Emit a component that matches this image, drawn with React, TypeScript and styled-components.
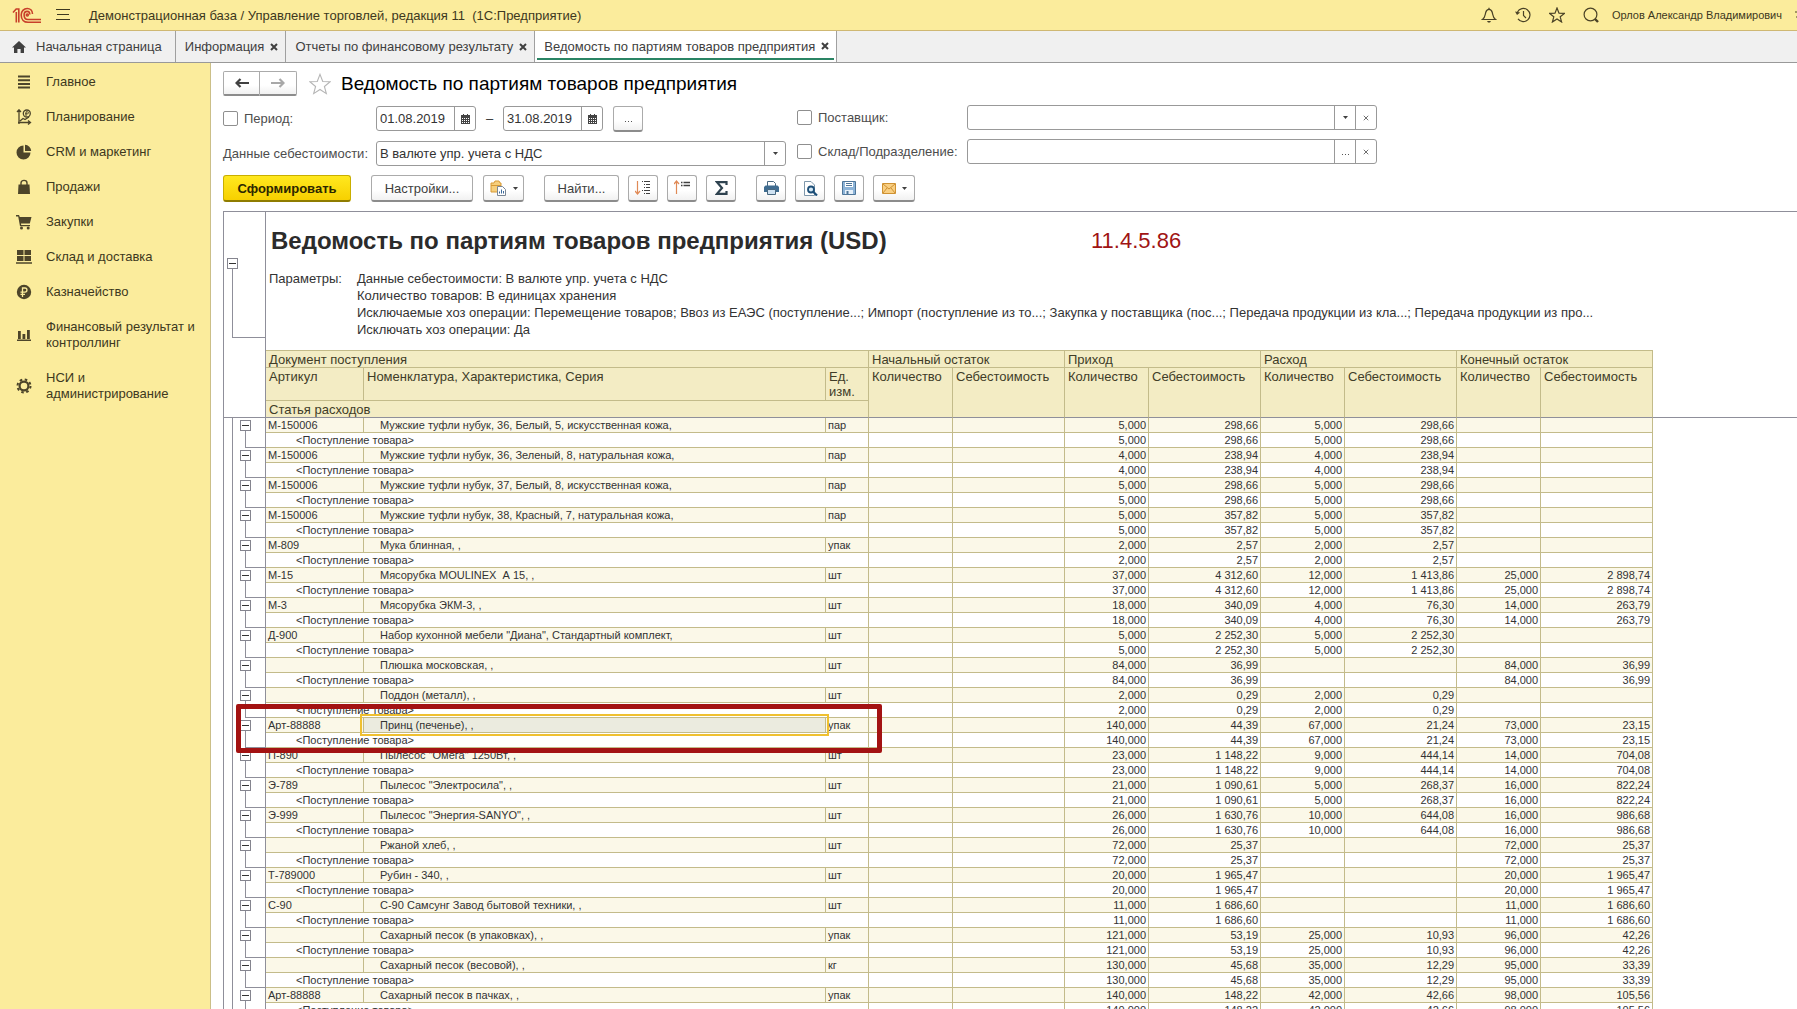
import React from 'react';
import styled, { createGlobalStyle, css } from 'styled-components';

const GlobalStyle = createGlobalStyle`
  *, *::before, *::after { box-sizing: border-box; }
  body { margin: 0; background: #fff; }
  body, button, input, select {
    font-family: "Liberation Sans", Arial, sans-serif;
    font-size: 13px;
    color: #333;
  }
  svg { display: block; flex: none; }
`;

const Page = styled.div`
  display: flex;
  flex-direction: column;
  height: 100vh;
  overflow: hidden;
`;

/* ---------- top bar ---------- */

const TopBar = styled.header`
  display: flex;
  align-items: center;
  height: 31px;
  flex: none;
  padding: 0 0 0 12px;
  background: #fbec9c;
  border-bottom: 1px solid #cfb873;
  overflow: hidden;
`;

const IconButton = styled.button`
  display: flex;
  align-items: center;
  flex: none;
  padding: 0;
  border: 0;
  background: none;
  color: #4a4226;
  overflow: hidden;
`;

const MenuButton = styled(IconButton)`
  margin-left: 14px;
`;

const AppTitle = styled.span`
  margin-left: 19px;
  white-space: nowrap;
  color: #3d3820;
`;

const TopTools = styled.div`
  display: flex;
  align-items: center;
  gap: 18px;
  margin-left: auto;
`;

const UserName = styled.a`
  margin: 0 13px 0 13px;
  font-size: 11px;
  color: #3d3820;
  text-decoration: none;
  white-space: nowrap;
`;

/* ---------- tabs ---------- */

const Tabs = styled.nav`
  display: flex;
  height: 32px;
  flex: none;
  background: #f0f0f0;
  border-bottom: 1px solid #999;
`;

const Tab = styled.div`
  display: flex;
  align-items: center;
  gap: 6px;
  padding: 0 7px 0 9px;
  border-right: 1px solid #a0a0a0;
  white-space: nowrap;
`;

const HomeTab = styled(Tab)`
  gap: 10px;
  padding: 0 13px 0 12px;
`;

const ActiveTab = styled(Tab)`
  align-items: flex-start;
  padding: 0 2px;
  background: #fff;
`;

const ActiveInner = styled.div`
  display: flex;
  align-items: center;
  gap: 6px;
  height: 29px;
  padding: 3px 5px 0 7px;
  border-bottom: 2px solid #2a8464;
`;

const TabLink = styled.a`
  color: #404040;
  text-decoration: none;
`;

/* ---------- sidebar ---------- */

const Body = styled.div`
  display: flex;
  flex: 1;
  min-height: 0;
`;

const Sidebar = styled.nav`
  display: flex;
  flex-direction: column;
  width: 211px;
  flex: none;
  padding-top: 1px;
  background: #fbec9c;
  border-right: 1px solid #cbbf88;
`;

const SideLink = styled.a`
  display: flex;
  align-items: center;
  gap: 14px;
  padding: 10px 12px 9px 16px;
  line-height: 16px;
  color: #3d3820;
  text-decoration: none;
`;

/* ---------- main ---------- */

const Main = styled.main`
  display: flex;
  flex-direction: column;
  flex: 1;
  min-width: 0;
  gap: 9px;
  padding: 8px 0 0 12px;
`;

const PageHead = styled.div`
  display: flex;
  align-items: center;
  height: 25px;
  flex: none;
`;

const button = css`
  display: flex;
  align-items: center;
  justify-content: center;
  flex: none;
  padding: 0;
  color: #404040;
  border: 1px solid #ababab;
  border-bottom: 2px solid #8c8c8c;
  background: linear-gradient(#fff 60%, #f1f1f1);
`;

const NavButtons = styled.div`
  display: flex;
  & > button { height: 25px; width: 37px; }
  & > button:first-child { border-radius: 2px 0 0 2px; }
  & > button:last-child { border-left: 0; border-radius: 0 2px 2px 0; }
`;

const NavButton = styled.button`
  ${button}
`;

const PageTitle = styled.h1`
  margin: 0 0 0 10px;
  font-size: 19px;
  font-weight: 400;
  line-height: 24px;
  color: #000;
`;

const Filters = styled.div`
  display: flex;
  align-items: flex-start;
  gap: 11px;
`;

const FilterColumn = styled.div<{ $top: number; $gap: number; $width: number }>`
  display: flex;
  flex-direction: column;
  gap: ${(p) => p.$gap}px;
  width: ${(p) => p.$width}px;
  padding-top: ${(p) => p.$top}px;
`;

const FilterRow = styled.div`
  display: flex;
  align-items: center;
  height: 25px;
`;

const FieldLabel = styled.label<{ $width: number }>`
  display: flex;
  align-items: center;
  gap: 6px;
  width: ${(p) => p.$width}px;
  flex: none;
  color: #4d4d4d;
  white-space: nowrap;
`;

const Check = styled.input.attrs({ type: 'checkbox' })`
  appearance: none;
  width: 15px;
  height: 15px;
  margin: 0;
  flex: none;
  border: 1px solid #8f8f8f;
  border-radius: 2px;
  background: #fff;
`;

const Field = styled.div<{ $width?: number }>`
  display: flex;
  height: 25px;
  ${(p) => (p.$width ? `width: ${p.$width}px;` : 'flex: 1;')}
  border: 1px solid #999;
  border-radius: 3px;
  background: #fff;
`;

const fieldText = css`
  appearance: none;
  flex: 1;
  min-width: 0;
  padding: 0 3px;
  border: 0;
  outline: 0;
  background: none;
`;

const TextInput = styled.input`
  ${fieldText}
`;

const SelectInput = styled.select`
  ${fieldText}
`;

const FieldButton = styled.button<{ $width: number }>`
  display: flex;
  align-items: center;
  justify-content: center;
  width: ${(p) => p.$width}px;
  flex: none;
  padding: 0;
  border: 0;
  border-left: 1px solid #999;
  background: none;
  color: #404040;
`;

const Dash = styled.span`
  width: 27px;
  text-align: center;
`;

const PeriodButton = styled.button`
  ${button}
  width: 30px;
  height: 26px;
  margin-left: 10px;
  border-radius: 3px;
`;

const Toolbar = styled.div`
  display: flex;
  height: 27px;
  flex: none;
`;

const ToolGroup = styled.div<{ $gap: number }>`
  display: flex;
  gap: ${(p) => p.$gap}px;
  margin-right: 20px;
`;

const ToolButton = styled.button<{ $width: number }>`
  ${button}
  gap: 6px;
  width: ${(p) => p.$width}px;
  height: 27px;
  border-radius: 3px;
`;

const PrimaryButton = styled(ToolButton)`
  font-weight: 700;
  color: #2b2600;
  border-color: #c9ae00;
  border-bottom-color: #8f7c00;
  background: linear-gradient(#ffe81f, #f7d000);
`;

/* ---------- spreadsheet ---------- */

const LINE = '#8f8f9a';
const CELL = '#c3bb8a';

const Sheet = styled.section`
  flex: 1;
  min-height: 0;
  overflow: hidden;
  border-top: 1px solid ${LINE};
`;

const SheetHead = styled.div`
  display: flex;
`;

const HeadGutter = styled.div`
  width: 43px;
  flex: none;
  padding-top: 46px;
  border-left: 1px solid ${LINE};
  border-right: 1px solid ${LINE};
`;

const Toggle = styled.button<{ $indent: number }>`
  display: flex;
  align-items: center;
  justify-content: center;
  width: 11px;
  height: 11px;
  margin: 0 0 0 ${(p) => p.$indent}px;
  padding: 0;
  border: 1px solid #85858f;
  background: #fff;
  &::before { content: ''; width: 7px; height: 1px; background: #333; }
`;

const Stem = styled.div<{ $indent: number; $height: number }>`
  height: ${(p) => p.$height}px;
  margin-left: ${(p) => p.$indent}px;
  border-left: 1px solid ${LINE};
  border-bottom: 1px solid ${LINE};
`;

const HeadContent = styled.div`
  flex: 1;
  padding: 15px 3px 12px;
`;

const TitleRow = styled.div`
  display: flex;
  align-items: center;
  height: 28px;
  padding-left: 2px;
`;

const ReportTitle = styled.h2`
  margin: 0;
  width: 820px;
  font-size: 24px;
  line-height: 28px;
  color: #2b2b2b;
`;

const Version = styled.span`
  font-size: 22px;
  color: #a01414;
`;

const Params = styled.dl`
  display: flex;
  margin: 15px 0 0;
  line-height: 17px;
  color: #333;
`;

const ParamsName = styled.dt`
  width: 88px;
  flex: none;
`;

const ParamsText = styled.dd`
  margin: 0;
  white-space: nowrap;
`;

const Table = styled.table`
  width: 100%;
  table-layout: fixed;
  border-spacing: 0;
  color: #333;
`;

const ColumnNames = styled.tr`
  height: 33px;
`;

const HeadCell = styled.th<{ $first?: boolean }>`
  padding: 1px 3px 0;
  font-size: 13px;
  font-weight: 400;
  line-height: 15px;
  text-align: left;
  vertical-align: top;
  color: #403c28;
  background: #f3ecc4;
  border-right: 1px solid ${CELL};
  border-bottom: 1px solid ${CELL};
  ${(p) => p.$first && `border-top: 1px solid ${CELL};`}
`;

const FreezeCell = styled(HeadCell)`
  border-bottom-color: ${LINE};
`;

const GutterHead = styled.td`
  border-left: 1px solid ${LINE};
  border-right: 1px solid ${LINE};
  border-bottom: 1px solid ${LINE};
`;

const FillerHead = styled.td`
  border-bottom: 1px solid ${LINE};
`;

const GutterCell = styled.td`
  position: relative;
  padding: 0;
  border-right: 1px solid ${LINE};
`;

const GutterInner = styled.div`
  display: flex;
  height: 30px;
`;

const GutterStrip = styled.div`
  width: 10px;
  border-left: 1px solid ${LINE};
  border-right: 1px solid ${LINE};
`;

const GutterBranch = styled.div`
  flex: 1;
  padding-top: 2px;
`;

const Cell = styled.td<{ $item?: boolean; $indent?: number; $num?: boolean; $selected?: boolean }>`
  position: relative;
  padding: 0 2px 0 ${(p) => p.$indent ?? 2}px;
  font-size: 11px;
  line-height: 14px;
  white-space: nowrap;
  text-align: ${(p) => (p.$num ? 'right' : 'left')};
  background: ${(p) => (p.$selected ? '#ebebdf' : p.$item ? '#fbf8e8' : '#fff')};
  border-right: 1px solid ${CELL};
  border-bottom: 1px solid ${CELL};
`;

const Selection = styled.span`
  position: absolute;
  inset: -4px;
  border: 2px solid #efc030;
  z-index: 1;
  pointer-events: none;
`;

const Highlight = styled.span`
  position: absolute;
  top: -14px;
  left: 13px;
  width: 646px;
  height: 49px;
  border: 5px solid #a31212;
  border-radius: 2px;
  z-index: 2;
  pointer-events: none;
`;

/* ---------- icons ---------- */

const Logo = () => (
  <svg width="30" height="17" viewBox="0 0 30 17" fill="none" stroke="#c8402a" strokeWidth="1.6">
    <path d="M1 5.5 L4.2 2 H6.8 V15.5 M4.3 5 V15.5" />
    <path d="M20.5 7 C20.5 3.5 18 1.5 15.2 1.5 C11.8 1.5 9.2 4.3 9.2 8 C9.2 12.5 12 15.3 16 15.3 H29" />
    <path d="M17.8 7.6 C17.8 5.6 16.8 4.4 15.2 4.4 C13.4 4.4 12.1 5.8 12.1 8 C12.1 10.9 13.5 12.5 16 12.5 H29" />
    <circle cx="15.3" cy="8" r="1" />
  </svg>
);

const Burger = () => (
  <svg width="14" height="12" viewBox="0 0 14 12" stroke="#3d3820">
    <path d="M0 .5H14M1 5.5H13M0 10.5H14" />
  </svg>
);

const Line16 = ({ children }: { children: React.ReactNode }) => (
  <svg width="16" height="16" viewBox="0 0 16 16" fill="none" stroke="#4a4226" strokeWidth="1.2">
    {children}
  </svg>
);

const Bell = () => (
  <Line16>
    <path d="M1.5 12.5 H14.5 C11.8 10.5 12 8.5 11.3 5.5 C10.8 3.5 9.5 2.4 8 2.4 C6.5 2.4 5.2 3.5 4.7 5.5 C4 8.5 4.2 10.5 1.5 12.5 Z" />
    <path d="M8 .8V2.4" />
    <path d="M6 14 H10 L9 15.6 H7Z" fill="#4a4226" stroke="none" />
  </Line16>
);

const History = () => (
  <Line16>
    <path d="M2.5 5 A6.6 6.6 0 1 1 3 11.8" />
    <path d="M8.5 4V8.5L11 11" />
    <path d="M0 4.5 L5.2 5.6 L2 8 Z" fill="#4a4226" stroke="none" />
  </Line16>
);

const starPath = 'M8 1 L10 6.2 L15.4 6.4 L11.2 9.8 L12.6 15 L8 12 L3.4 15 L4.8 9.8 L.6 6.4 L6 6.2 Z';

const Star = () => (
  <Line16>
    <path d={starPath} />
  </Line16>
);

const Search = () => (
  <Line16>
    <circle cx="7.5" cy="7.5" r="6.4" />
    <path d="M12 12 L15 15" strokeWidth="2.4" />
  </Line16>
);

const Home = () => (
  <svg width="14" height="12" viewBox="0 0 14 12" fill="#404040">
    <path d="M7 0 L14 6.5 H12 V12 H8.6 V8 H5.4 V12 H2 V6.5 H0 Z" />
  </svg>
);

const Cross = ({ size = 8, width = 2 }: { size?: number; width?: number }) => (
  <svg width={size} height={size} viewBox="0 0 8 8" stroke="#404040" strokeWidth={width}>
    <path d="M1 1L7 7M7 1L1 7" />
  </svg>
);

const Caret = () => (
  <svg width="5" height="3" viewBox="0 0 5 3" fill="#404040">
    <path d="M0 0H5L2.5 3Z" />
  </svg>
);

const Dots = () => (
  <svg width="7" height="9" viewBox="0 0 7 9" fill="#555">
    <path d="M0 7h1v1H0zM3 7h1v1H3zM6 7h1v1H6z" />
  </svg>
);

const Arrow = ({ color, flip }: { color: string; flip?: boolean }) => (
  <svg width="14" height="10" viewBox="0 0 14 10" fill="none" stroke={color} strokeWidth="2.2">
    {flip ? <path d="M0 5H13M8.5 1L12.5 5L8.5 9" /> : <path d="M14 5H1M5.5 1L1.5 5L5.5 9" />}
  </svg>
);

const FavStarButton = styled(IconButton)`
  margin-left: 12px;
`;

const FavStar = () => (
  <svg width="22" height="22" viewBox="0 0 16 16" fill="none" stroke="#b5b5b5" strokeWidth=".8">
    <path d={starPath} />
  </svg>
);

const Calendar = () => (
  <svg width="9" height="10" viewBox="0 0 9 10">
    <path d="M0 1H9V10H0Z" fill="#444" />
    <path d="M2 0h1v2H2zM6 0h1v2H6z" fill="#444" />
    <path d="M1 4h1v1H1zM3 4h1v1H3zM5 4h1v1H5zM7 4h1v1H7zM1 6h1v1H1zM3 6h1v1H3zM5 6h1v1H5zM7 6h1v1H7zM1 8h1v1H1zM3 8h1v1H3zM5 8h1v1H5zM7 8h1v1H7z" fill="#fff" />
  </svg>
);

const side = (children: React.ReactNode) => (
  <svg width="16" height="16" viewBox="0 0 16 16" fill="#4d452a" stroke="none">
    {children}
  </svg>
);

const sideIcons = {
  main: side(<path d="M2 1.5h12v2H2zM2 5.2h12v2H2zM2 8.900h12v2H2zM2 12.6h12v2H2z" />),
  plan: side(
    <g fill="none" stroke="#4d452a" strokeWidth="1.3">
      <path d="M3 15V1M1 3L3 .8L5 3M2 13.5H14M12 11.5L14.5 13.5L12 15.5M4 12L7 9.5L9 10.5L13 8" />
      <circle cx="10.8" cy="4.5" r="3.5" />
      <path d="M10 7V2.8H11.5C12.8 2.8 12.8 4.8 11.5 4.8H9" strokeWidth="1" />
    </g>,
  ),
  crm: side(
    <>
      <path d="M7.5 1.5V8.5H14.5A7 7 0 1 1 7.5 1.5Z" />
      <path d="M9 .8A6.5 6.5 0 0 1 15.2 7H9Z" />
    </>,
  ),
  sales: side(
    <>
      <path d="M2.5 5.5H13.5L14 15H2Z" />
      <path d="M5 8V4C5 .5 11 .5 11 4V8" fill="none" stroke="#4d452a" strokeWidth="1.4" />
    </>,
  ),
  buy: side(
    <>
      <path d="M0 1H3L3.8 3H15.5L13.8 9.5H5L5.2 11H14V12.3H4L2.2 2.4H0Z" />
      <circle cx="5.5" cy="14" r="1.5" />
      <circle cx="12.2" cy="14" r="1.5" />
    </>,
  ),
  stock: side(<path d="M1 1h6.5v5H1zM8.5 1H15v5H8.5zM1 7h6.5v5H1zM8.5 7H15v5H8.5zM0 13.2h16v1.6H0z" />),
  cash: side(
    <>
      <circle cx="8" cy="8" r="7.2" />
      <path d="M6.5 13V4H9C11.6 4 11.6 8.2 9 8.2H4.5M4.5 10.3H9" fill="none" stroke="#fbec9c" strokeWidth="1.3" />
    </>,
  ),
  chart: side(<path d="M2 4h2.8v8H2zM6.5 7h2.8v5H6.5zM11 3h2.8v9H11zM1 12.5h14V14H1z" />),
  gear: side(
    <g fill="none" stroke="#4d452a">
      <circle cx="8" cy="8" r="4.4" strokeWidth="2.2" />
      <circle cx="8" cy="8" r="6.5" strokeWidth="2" strokeDasharray="2.55 2.55" />
    </g>,
  ),
};

const Variants = () => (
  <svg width="17" height="16" viewBox="0 0 17 16" fill="none">
    <path d="M1 3H4L5 1H9L10 3H11V12H1Z" fill="#f6cf7d" stroke="#d79a36" />
    <path d="M1 5.5H11" stroke="#d79a36" />
    <path d="M7.5 6.5H12.5L15.5 9.5V15.5H7.5Z" fill="#fff" stroke="#7a8694" />
    <path d="M9.5 13.5V11.5M11.5 13.5V9.5M13.5 13.5V11" stroke="#3c6b9c" />
  </svg>
);

const Expand = () => (
  <svg width="16" height="16" viewBox="0 0 16 16" fill="none">
    <path d="M2.5 1V14M0 11L2.5 14L5 11" stroke="#e08a56" strokeWidth="1.2" />
    <path d="M7 1.5H8M9 1.5H15M9 4.5H10M11 4.5H15M9 7.5H10M11 7.5H15M7 10.5H8M9 10.5H15M9 13.5H10M11 13.5H15" stroke="#404040" />
  </svg>
);

const Collapse = () => (
  <svg width="16" height="16" viewBox="0 0 16 16" fill="none">
    <path d="M2.5 1V14M0 4L2.5 1L5 4" stroke="#e08a56" strokeWidth="1.2" />
    <path d="M7 2.5H8.5M9.5 2.5H16M7 5.500H8.5M9.5 5.500H16" stroke="#404040" strokeWidth="1.5" />
  </svg>
);

const Sum = () => (
  <svg width="13" height="14" viewBox="0 0 13 14" fill="none" stroke="#2f4350" strokeWidth="2.2">
    <path d="M11.5 4V1.2H2L7 7L2 12.8H11.5V10" />
  </svg>
);

const Printer = () => (
  <svg width="15" height="14" viewBox="0 0 15 14">
    <path d="M3.5 5V.5H9.5L11.5 2.5V5" fill="#fff" stroke="#48677f" />
    <path d="M1.5 4.5H13.5L15 6V11H0V6Z" fill="#3f6c90" />
    <path d="M3.5 8.5H11.5V13.5H3.5Z" fill="#cfe2f2" stroke="#48677f" />
  </svg>
);

const Preview = () => (
  <svg width="15" height="15" viewBox="0 0 15 15" fill="none">
    <path d="M1.5 .5H8L11.5 4V14.5H1.5Z" fill="#fff" stroke="#7e97ab" />
    <circle cx="8" cy="8.5" r="3" fill="#d5e8f5" stroke="#1d4f78" strokeWidth="1.8" />
    <path d="M10.2 10.8L14 14.5" stroke="#1d4f78" strokeWidth="2.2" />
  </svg>
);

const Save = () => (
  <svg width="14" height="14" viewBox="0 0 14 14">
    <path d="M.5 .5H13.5V13.5H.5Z" fill="#8db4d8" stroke="#4f7699" />
    <path d="M3 1H11V6H3Z" fill="#fff" />
    <path d="M4 2.5H10M4 4.5H10" stroke="#4f7699" />
    <path d="M3 9H11V13H3Z" fill="#e6f0f9" />
    <path d="M4.5 10H6.5V13H4.5Z" fill="#4f7699" />
  </svg>
);

const Mail = () => (
  <svg width="14" height="11" viewBox="0 0 14 11">
    <path d="M.5 .5H13.5V10.5H.5Z" fill="#f9cf82" stroke="#cf9233" />
    <path d="M1 1L7 6L13 1M1 10L5 5M13 10L9 5" fill="none" stroke="#cf9233" />
  </svg>
);

/* ---------- data ---------- */

const menu: [keyof typeof sideIcons, string][] = [
  ['main', 'Главное'],
  ['plan', 'Планирование'],
  ['crm', 'CRM и маркетинг'],
  ['sales', 'Продажи'],
  ['buy', 'Закупки'],
  ['stock', 'Склад и доставка'],
  ['cash', 'Казначейство'],
  ['chart', 'Финансовый результат и контроллинг'],
  ['gear', 'НСИ и администрирование'],
];

type Item = { code: string; name: string; unit: string; income: string[]; expense?: string[]; rest?: string[]; marked?: boolean };

const items: Item[] = [
  { code: 'М-150006', name: 'Мужские туфли нубук, 36, Белый, 5, искусственная кожа,', unit: 'пар', income: ['5,000', '298,66'], expense: ['5,000', '298,66'] },
  { code: 'М-150006', name: 'Мужские туфли нубук, 36, Зеленый, 8, натуральная кожа,', unit: 'пар', income: ['4,000', '238,94'], expense: ['4,000', '238,94'] },
  { code: 'М-150006', name: 'Мужские туфли нубук, 37, Белый, 8, искусственная кожа,', unit: 'пар', income: ['5,000', '298,66'], expense: ['5,000', '298,66'] },
  { code: 'М-150006', name: 'Мужские туфли нубук, 38, Красный, 7, натуральная кожа,', unit: 'пар', income: ['5,000', '357,82'], expense: ['5,000', '357,82'] },
  { code: 'М-809', name: 'Мука блинная, ,', unit: 'упак', income: ['2,000', '2,57'], expense: ['2,000', '2,57'] },
  { code: 'М-15', name: 'Мясорубка MOULINEX\u00a0 А 15, ,', unit: 'шт', income: ['37,000', '4 312,60'], expense: ['12,000', '1 413,86'], rest: ['25,000', '2 898,74'] },
  { code: 'М-3', name: 'Мясорубка ЭКМ-3, ,', unit: 'шт', income: ['18,000', '340,09'], expense: ['4,000', '76,30'], rest: ['14,000', '263,79'] },
  { code: 'Д-900', name: 'Набор кухонной мебели "Диана", Стандартный комплект,', unit: 'шт', income: ['5,000', '2 252,30'], expense: ['5,000', '2 252,30'] },
  { code: '', name: 'Плюшка московская, ,', unit: 'шт', income: ['84,000', '36,99'], rest: ['84,000', '36,99'] },
  { code: '', name: 'Поддон (металл), ,', unit: 'шт', income: ['2,000', '0,29'], expense: ['2,000', '0,29'] },
  { code: 'Арт-88888', name: 'Принц (печенье), ,', unit: 'упак', income: ['140,000', '44,39'], expense: ['67,000', '21,24'], rest: ['73,000', '23,15'], marked: true },
  { code: 'П-890', name: 'Пылесос "Омега" 1250Вт, ,', unit: 'шт', income: ['23,000', '1 148,22'], expense: ['9,000', '444,14'], rest: ['14,000', '704,08'] },
  { code: 'Э-789', name: 'Пылесос "Электросила", ,', unit: 'шт', income: ['21,000', '1 090,61'], expense: ['5,000', '268,37'], rest: ['16,000', '822,24'] },
  { code: 'Э-999', name: 'Пылесос "Энергия-SANYO", ,', unit: 'шт', income: ['26,000', '1 630,76'], expense: ['10,000', '644,08'], rest: ['16,000', '986,68'] },
  { code: '', name: 'Ржаной хлеб, ,', unit: 'шт', income: ['72,000', '25,37'], rest: ['72,000', '25,37'] },
  { code: 'Т-789000', name: 'Рубин - 340, ,', unit: 'шт', income: ['20,000', '1 965,47'], rest: ['20,000', '1 965,47'] },
  { code: 'С-90', name: 'С-90 Самсунг Завод бытовой техники, ,', unit: 'шт', income: ['11,000', '1 686,60'], rest: ['11,000', '1 686,60'] },
  { code: '', name: 'Сахарный песок (в упаковках), ,', unit: 'упак', income: ['121,000', '53,19'], expense: ['25,000', '10,93'], rest: ['96,000', '42,26'] },
  { code: '', name: 'Сахарный песок (весовой), ,', unit: 'кг', income: ['130,000', '45,68'], expense: ['35,000', '12,29'], rest: ['95,000', '33,39'] },
  { code: 'Арт-88888', name: 'Сахарный песок в пачках, ,', unit: 'упак', income: ['140,000', '148,22'], expense: ['42,000', '42,66'], rest: ['98,000', '105,56'] },
];

const groups = ['Начальный остаток', 'Приход', 'Расход', 'Конечный остаток'];
const columns = [43, 98, 462, 43, 84, 112, 84, 112, 84, 112, 84, 112];

const ItemRows = ({ item }: { item: Item }) => {
  const none = ['', ''];
  const values = [none, item.income, item.expense ?? none, item.rest ?? none].flat();
  return (
    <>
      <tr>
        <GutterCell rowSpan={2}>
          <GutterInner>
            <GutterStrip />
            <GutterBranch>
              <Toggle $indent={7} aria-label="Свернуть" />
              <Stem $indent={12} $height={17} />
            </GutterBranch>
          </GutterInner>
          {item.marked && <Highlight />}
        </GutterCell>
        <Cell $item>{item.code}</Cell>
        <Cell $item $indent={16} $selected={item.marked}>
          {item.name}
          {item.marked && <Selection />}
        </Cell>
        <Cell $item>{item.unit}</Cell>
        {values.map((v, i) => (
          <Cell key={i} $item $num>{v}</Cell>
        ))}
        <td />
      </tr>
      <tr>
        <Cell colSpan={3} $indent={30}>&lt;Поступление товара&gt;</Cell>
        {values.map((v, i) => (
          <Cell key={i} $num>{v}</Cell>
        ))}
        <td />
      </tr>
    </>
  );
};

export default function App() {
  return (
    <Page>
      <GlobalStyle />
      <TopBar>
        <Logo />
        <MenuButton aria-label="Меню"><Burger /></MenuButton>
        <AppTitle>Демонстрационная база / Управление торговлей, редакция 11&nbsp; (1С:Предприятие)</AppTitle>
        <TopTools>
          <IconButton aria-label="Оповещения"><Bell /></IconButton>
          <IconButton aria-label="История"><History /></IconButton>
          <IconButton aria-label="Избранное"><Star /></IconButton>
          <IconButton aria-label="Поиск"><Search /></IconButton>
        </TopTools>
        <UserName href="#user">Орлов Александр Владимирович</UserName>
        <svg width="2" height="12" viewBox="0 0 2 12" stroke="#4a4226"><path d="M0 3H2M1 8H2" /></svg>
      </TopBar>

      <Tabs>
        <HomeTab><Home /><TabLink href="#home">Начальная страница</TabLink></HomeTab>
        <Tab><TabLink href="#info">Информация</TabLink><IconButton aria-label="Закрыть"><Cross /></IconButton></Tab>
        <Tab><TabLink href="#reports">Отчеты по финансовому результату</TabLink><IconButton aria-label="Закрыть"><Cross /></IconButton></Tab>
        <ActiveTab>
          <ActiveInner>
            <TabLink href="#batches">Ведомость по партиям товаров предприятия</TabLink>
            <IconButton aria-label="Закрыть"><Cross /></IconButton>
          </ActiveInner>
        </ActiveTab>
      </Tabs>

      <Body>
        <Sidebar>
          {menu.map(([icon, text]) => (
            <SideLink key={icon} href={'#' + icon}>{sideIcons[icon]}<span>{text}</span></SideLink>
          ))}
        </Sidebar>

        <Main>
          <PageHead>
            <NavButtons>
              <NavButton aria-label="Назад"><Arrow color="#404040" /></NavButton>
              <NavButton aria-label="Вперед"><Arrow color="#a8a8a8" flip /></NavButton>
            </NavButtons>
            <FavStarButton aria-label="В избранное"><FavStar /></FavStarButton>
            <PageTitle>Ведомость по партиям товаров предприятия</PageTitle>
          </PageHead>

          <Filters>
            <FilterColumn $top={1} $gap={10} $width={563}>
              <FilterRow>
                <FieldLabel $width={153}><Check />Период:</FieldLabel>
                <Field $width={100}>
                  <TextInput aria-label="Начало периода" defaultValue="01.08.2019" />
                  <FieldButton $width={21} aria-label="Календарь"><Calendar /></FieldButton>
                </Field>
                <Dash>–</Dash>
                <Field $width={100}>
                  <TextInput aria-label="Конец периода" defaultValue="31.08.2019" />
                  <FieldButton $width={21} aria-label="Календарь"><Calendar /></FieldButton>
                </Field>
                <PeriodButton aria-label="Выбрать период"><Dots /></PeriodButton>
              </FilterRow>
              <FilterRow>
                <FieldLabel $width={153} htmlFor="cost">Данные себестоимости:</FieldLabel>
                <Field>
                  <SelectInput id="cost"><option>В валюте упр. учета с НДС</option></SelectInput>
                  <FieldButton $width={21} aria-label="Открыть список"><Caret /></FieldButton>
                </Field>
              </FilterRow>
            </FilterColumn>
            <FilterColumn $top={0} $gap={9} $width={580}>
              <FilterRow>
                <FieldLabel $width={170}><Check />Поставщик:</FieldLabel>
                <Field>
                  <TextInput aria-label="Поставщик" />
                  <FieldButton $width={21} aria-label="Открыть список"><Caret /></FieldButton>
                  <FieldButton $width={21} aria-label="Очистить"><Cross size={6} width={1} /></FieldButton>
                </Field>
              </FilterRow>
              <FilterRow>
                <FieldLabel $width={170}><Check />Склад/Подразделение:</FieldLabel>
                <Field>
                  <TextInput aria-label="Склад/Подразделение" />
                  <FieldButton $width={21} aria-label="Выбрать"><Dots /></FieldButton>
                  <FieldButton $width={21} aria-label="Очистить"><Cross size={6} width={1} /></FieldButton>
                </Field>
              </FilterRow>
            </FilterColumn>
          </Filters>

          <Toolbar>
            <ToolGroup $gap={0}>
              <PrimaryButton $width={128}>Сформировать</PrimaryButton>
            </ToolGroup>
            <ToolGroup $gap={10}>
              <ToolButton $width={102}>Настройки...</ToolButton>
              <ToolButton $width={41} aria-label="Варианты отчета"><Variants /><Caret /></ToolButton>
            </ToolGroup>
            <ToolGroup $gap={9}>
              <ToolButton $width={75}>Найти...</ToolButton>
              <ToolButton $width={30} aria-label="Развернуть группы"><Expand /></ToolButton>
              <ToolButton $width={30} aria-label="Свернуть группы"><Collapse /></ToolButton>
              <ToolButton $width={30} aria-label="Сумма"><Sum /></ToolButton>
            </ToolGroup>
            <ToolGroup $gap={9}>
              <ToolButton $width={30} aria-label="Печать"><Printer /></ToolButton>
              <ToolButton $width={30} aria-label="Просмотр"><Preview /></ToolButton>
              <ToolButton $width={30} aria-label="Сохранить"><Save /></ToolButton>
              <ToolButton $width={42} aria-label="Отправить"><Mail /><Caret /></ToolButton>
            </ToolGroup>
          </Toolbar>

          <Sheet>
            <SheetHead>
              <HeadGutter>
                <Toggle $indent={3} aria-label="Свернуть" />
                <Stem $indent={8} $height={69} />
              </HeadGutter>
              <HeadContent>
                <TitleRow>
                  <ReportTitle>Ведомость по партиям товаров предприятия (USD)</ReportTitle>
                  <Version>11.4.5.86</Version>
                </TitleRow>
                <Params>
                  <ParamsName>Параметры:</ParamsName>
                  <ParamsText>
                    Данные себестоимости: В валюте упр. учета с НДС<br />
                    Количество товаров: В единицах хранения<br />
                    Исключаемые хоз операции: Перемещение товаров; Ввоз из ЕАЭС (поступление...; Импорт (поступление из то...; Закупка у поставщика (пос...; Передача продукции из кла...; Передача продукции из про...<br />
                    Исключать хоз операции: Да
                  </ParamsText>
                </Params>
              </HeadContent>
            </SheetHead>
            <Table>
              <colgroup>
                {columns.map((w, i) => <col key={i} width={w} />)}
                <col />
              </colgroup>
              <thead>
                <tr>
                  <GutterHead rowSpan={3} />
                  <HeadCell $first colSpan={3}>Документ поступления</HeadCell>
                  {groups.map((g) => <HeadCell key={g} $first colSpan={2}>{g}</HeadCell>)}
                  <FillerHead rowSpan={3} />
                </tr>
                <ColumnNames>
                  <HeadCell>Артикул</HeadCell>
                  <HeadCell>Номенклатура, Характеристика, Серия</HeadCell>
                  <HeadCell>Ед. изм.</HeadCell>
                  {groups.map((g) => (
                    <React.Fragment key={g}>
                      <FreezeCell rowSpan={2}>Количество</FreezeCell>
                      <FreezeCell rowSpan={2}>Себестоимость</FreezeCell>
                    </React.Fragment>
                  ))}
                </ColumnNames>
                <tr>
                  <FreezeCell colSpan={3}>Статья расходов</FreezeCell>
                </tr>
              </thead>
              <tbody>
                {items.map((item, i) => <ItemRows key={i} item={item} />)}
              </tbody>
            </Table>
          </Sheet>
        </Main>
      </Body>
    </Page>
  );
}
